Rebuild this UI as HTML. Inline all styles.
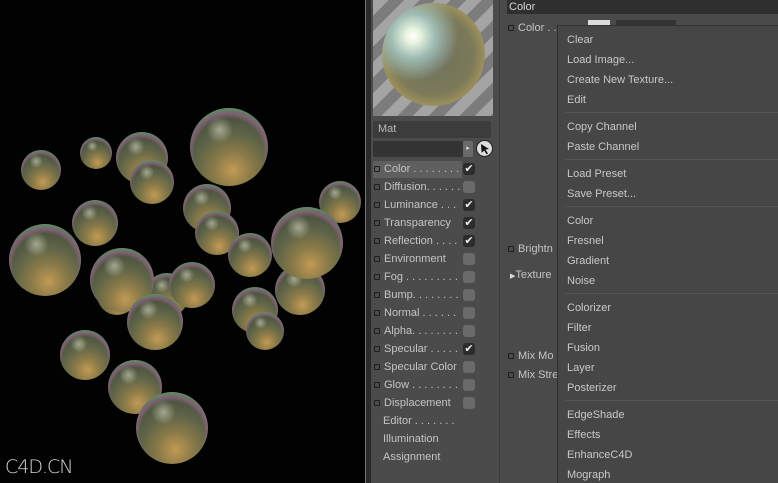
<!DOCTYPE html>
<html><head><meta charset="utf-8"><style>
*{margin:0;padding:0;box-sizing:border-box}
body{width:778px;height:483px;overflow:hidden;background:#4a4a4a;font-family:"Liberation Sans","DejaVu Sans",sans-serif;position:relative}
.vp{position:absolute;left:0;top:0;width:365px;height:483px;background:#020202;overflow:hidden}
.b{position:absolute;border-radius:50%;
background:
radial-gradient(circle at 38% 28%,rgba(255,255,235,.45) 0,rgba(255,255,235,0) 18%),
radial-gradient(circle at 50% 58%,rgba(0,0,0,0) 58%,rgba(190,110,180,.45) 66%,rgba(110,190,140,.45) 74%,rgba(220,210,140,.55) 84%,rgba(160,160,120,.7) 93%,rgba(30,30,20,.9) 100%),
radial-gradient(circle at 55% 80%,#c29a55 0,#8a7a48 25%,#5e6448 50%,#48503c 75%,#7a7a5a 100%)}
.wm{position:absolute;left:5px;top:456px;color:#d8d8d8;font-size:19px;letter-spacing:-1px;font-family:"DejaVu Sans",sans-serif;font-weight:300}
.sep{position:absolute;left:365px;top:0;width:6px;height:483px;background:#2a2a2a;border-left:1px solid #777}
.lp{position:absolute;left:371px;top:0;width:129px;height:483px;background:#4b4b4b;border-right:1px solid #3a3a3a}
.prev{position:absolute;left:373px;top:0;width:120px;height:116px;background:repeating-linear-gradient(135deg,#a4a4a4 0 11px,#7c7c7c 11px 22px);overflow:hidden}
.ps{position:absolute;left:9px;top:3px;width:103px;height:103px;border-radius:50%;
background:radial-gradient(circle at 30% 32%,#ffffff 0,#e8f4e0 7%,#9fbcb4 22%,rgba(120,140,120,0) 45%),radial-gradient(circle at 50% 50%,#6c7060 0,#7c7a58 55%,#b4a060 82%,#4a4030 100%)}
.mat{position:absolute;left:373px;top:121px;width:118px;height:17px;background:#3c3c3c;color:#b8b8b8;font-size:11px;padding:2px 5px;border-radius:2px}
.fld{position:absolute;left:373px;top:141px;width:90px;height:16px;background:#333;border-radius:2px}
.arr{position:absolute;left:463px;top:141px;width:10px;height:16px;background:#6a6a6a;border-radius:2px;color:#ddd;font-size:7px;text-align:center;line-height:16px}
.pick{position:absolute;left:476px;top:140px;width:17px;height:17px;border-radius:50%;background:#ddd;border:1px solid #222}
.row{position:absolute;left:373px;width:118px;height:17px;color:#c4c4c4;font-size:11px;line-height:17px;white-space:nowrap}
.row.sel{background:#5f5f5f;width:89px}
.dot{display:inline-block;width:6px;height:6px;border:1px solid #1e1e1e;border-radius:1px;margin:0 4px 1px 1px;vertical-align:middle}
.cb{position:absolute;left:90px;top:2px;width:12px;height:12px;border-radius:3px;background:#6a6a6a}
.cb.on{background:#2c2c2c;color:#eee;font-size:11px;line-height:12px;text-align:center}
.mp{position:absolute;left:501px;top:0;width:57px;height:483px;background:#4a4a4a}
.hdr{position:absolute;left:507px;top:0;width:271px;height:14px;background:#2f2f2f;color:#d6d6d6;font-size:11px;padding-left:2px;line-height:14px}
.lab{position:absolute;color:#c4c4c4;font-size:11px;white-space:nowrap}
.menu{position:absolute;left:557px;top:25px;width:221px;height:458px;background:#464646;border-left:1px solid #2e2e2e;border-top:1px solid #333}
.mi{position:absolute;left:9px;color:#c8c8c8;font-size:11px}
.ms{position:absolute;left:7px;right:0;height:1px;background:#2f2f2f;border-bottom:1px solid #555}
</style></head><body>
<div class="vp">
<div class="b" style="left:97px;top:275px;width:40px;height:40px"></div>
<div class="b" style="left:145px;top:273px;width:44px;height:44px"></div>
<div class="b" style="left:275px;top:265px;width:50px;height:50px"></div>
<div class="b" style="left:21px;top:150px;width:40px;height:40px"></div>
<div class="b" style="left:80px;top:137px;width:32px;height:32px"></div>
<div class="b" style="left:116px;top:132px;width:52px;height:52px"></div>
<div class="b" style="left:130px;top:160px;width:44px;height:44px"></div>
<div class="b" style="left:190px;top:108px;width:78px;height:78px"></div>
<div class="b" style="left:72px;top:200px;width:46px;height:46px"></div>
<div class="b" style="left:183px;top:184px;width:48px;height:48px"></div>
<div class="b" style="left:195px;top:211px;width:44px;height:44px"></div>
<div class="b" style="left:319px;top:181px;width:42px;height:42px"></div>
<div class="b" style="left:228px;top:233px;width:44px;height:44px"></div>
<div class="b" style="left:271px;top:207px;width:72px;height:72px"></div>
<div class="b" style="left:9px;top:224px;width:72px;height:72px"></div>
<div class="b" style="left:169px;top:262px;width:46px;height:46px"></div>
<div class="b" style="left:90px;top:248px;width:64px;height:64px"></div>
<div class="b" style="left:127px;top:294px;width:56px;height:56px"></div>
<div class="b" style="left:232px;top:287px;width:46px;height:46px"></div>
<div class="b" style="left:246px;top:312px;width:38px;height:38px"></div>
<div class="b" style="left:60px;top:330px;width:50px;height:50px"></div>
<div class="b" style="left:108px;top:360px;width:54px;height:54px"></div>
<div class="b" style="left:136px;top:392px;width:72px;height:72px"></div>
<div class="wm">C4D.CN</div>
</div>
<div class="sep"></div>
<div class="lp"></div>
<div class="prev"><div class="ps"></div></div>
<div class="mat">Mat</div>
<div class="fld"></div><div class="arr">▸</div>
<div class="pick"><svg width="15" height="15" viewBox="0 0 15 15"><path d="M4 3 L12 8 L8.5 8.6 L11 12.5 L9.5 13.3 L7.2 9.5 L4.6 11.8 Z" fill="#111"/></svg></div>

<div class="row sel" style="top:161px"><span class="dot"></span>Color . . . . . . . .</div><div class="row" style="top:161px"><div class="cb on">✔</div></div>
<div class="row" style="top:179px"><span class="dot"></span>Diffusion. . . . . .<div class="cb"></div></div>
<div class="row" style="top:197px"><span class="dot"></span>Luminance . . .<div class="cb on">✔</div></div>
<div class="row" style="top:215px"><span class="dot"></span>Transparency<div class="cb on">✔</div></div>
<div class="row" style="top:233px"><span class="dot"></span>Reflection . . . .<div class="cb on">✔</div></div>
<div class="row" style="top:251px"><span class="dot"></span>Environment<div class="cb"></div></div>
<div class="row" style="top:269px"><span class="dot"></span>Fog . . . . . . . . .<div class="cb"></div></div>
<div class="row" style="top:287px"><span class="dot"></span>Bump. . . . . . . .<div class="cb"></div></div>
<div class="row" style="top:305px"><span class="dot"></span>Normal . . . . . .<div class="cb"></div></div>
<div class="row" style="top:323px"><span class="dot"></span>Alpha. . . . . . . .<div class="cb"></div></div>
<div class="row" style="top:341px"><span class="dot"></span>Specular . . . . .<div class="cb on">✔</div></div>
<div class="row" style="top:359px"><span class="dot"></span>Specular Color<div class="cb"></div></div>
<div class="row" style="top:377px"><span class="dot"></span>Glow . . . . . . . .<div class="cb"></div></div>
<div class="row" style="top:395px"><span class="dot"></span>Displacement<div class="cb"></div></div>
<div class="row" style="top:413px;padding-left:10px">Editor . . . . . . .</div>
<div class="row" style="top:431px;padding-left:10px">Illumination</div>
<div class="row" style="top:449px;padding-left:10px">Assignment</div>

<div class="mp"></div>
<div class="hdr">Color</div>
<div class="lab" style="left:507px;top:22px"><span class="dot"></span>Color . .</div>
<div style="position:absolute;left:588px;top:20px;width:22px;height:6px;background:#ddd"></div>
<div style="position:absolute;left:616px;top:20px;width:60px;height:6px;background:#333"></div>
<div class="lab" style="left:507px;top:243px"><span class="dot"></span>Brightn</div>
<div class="lab" style="left:510px;top:269px"><span style="font-size:7px;color:#ddd">▶</span>Texture</div>
<div class="lab" style="left:507px;top:350px"><span class="dot"></span>Mix Mo</div>
<div class="lab" style="left:507px;top:369px"><span class="dot"></span>Mix Stre</div>

<div class="menu">
<div class="mi" style="top:8px">Clear</div>
<div class="mi" style="top:28px">Load Image...</div>
<div class="mi" style="top:48px">Create New Texture...</div>
<div class="mi" style="top:68px">Edit</div>
<div class="ms" style="top:86px"></div>
<div class="mi" style="top:95px">Copy Channel</div>
<div class="mi" style="top:115px">Paste Channel</div>
<div class="ms" style="top:133px"></div>
<div class="mi" style="top:142px">Load Preset</div>
<div class="mi" style="top:162px">Save Preset...</div>
<div class="ms" style="top:180px"></div>
<div class="mi" style="top:189px">Color</div>
<div class="mi" style="top:209px">Fresnel</div>
<div class="mi" style="top:229px">Gradient</div>
<div class="mi" style="top:249px">Noise</div>
<div class="ms" style="top:267px"></div>
<div class="mi" style="top:276px">Colorizer</div>
<div class="mi" style="top:296px">Filter</div>
<div class="mi" style="top:316px">Fusion</div>
<div class="mi" style="top:336px">Layer</div>
<div class="mi" style="top:356px">Posterizer</div>
<div class="ms" style="top:374px"></div>
<div class="mi" style="top:383px">EdgeShade</div>
<div class="mi" style="top:403px">Effects</div>
<div class="mi" style="top:423px">EnhanceC4D</div>
<div class="mi" style="top:443px">Mograph</div>
</div>
</body></html>
